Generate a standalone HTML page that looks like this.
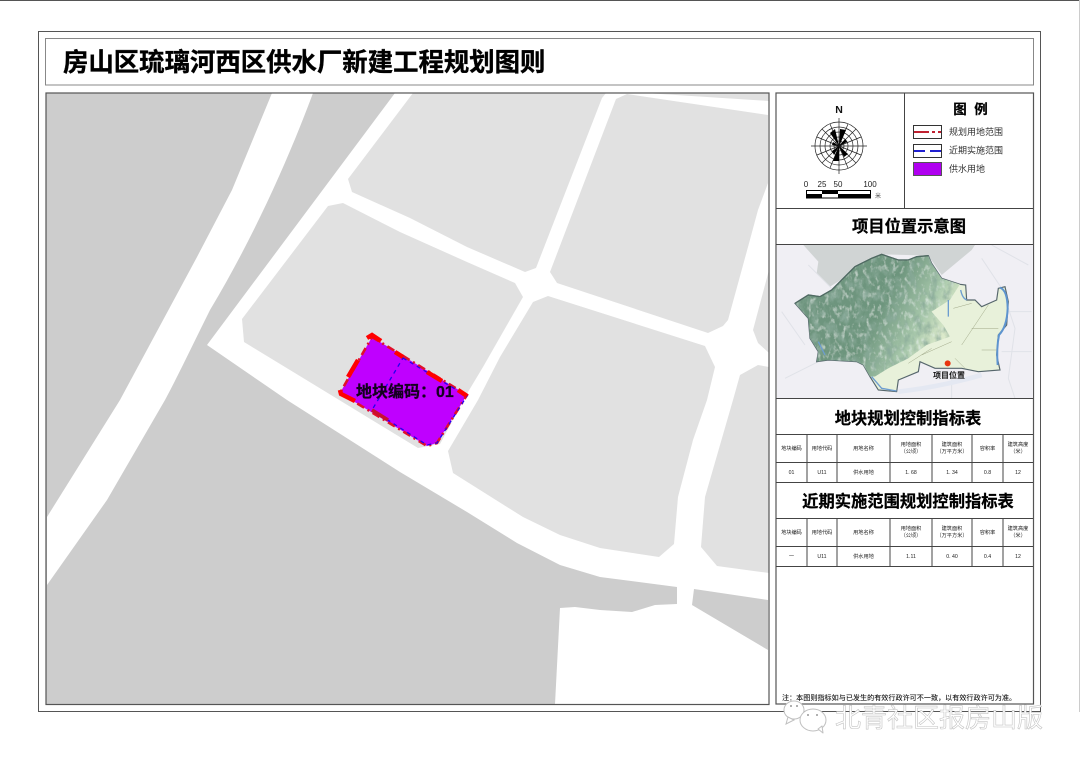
<!DOCTYPE html>
<html><head><meta charset="utf-8"><style>
html,body{margin:0;padding:0;background:#fff;width:1080px;height:764px;overflow:hidden}
svg{display:block}
text{font-family:"Liberation Sans","Noto Sans CJK SC",sans-serif}
.h{font-weight:700;fill:#000;text-anchor:middle;stroke:#000;stroke-width:.25}
.t{font-size:5.200px;fill:#222;text-anchor:middle}
.l{font-size:9px;fill:#333}
</style></head><body>
<svg width="1080" height="764" viewBox="0 0 1080 764" xmlns="http://www.w3.org/2000/svg">
<defs>
<clipPath id="mc"><rect x="46" y="93" width="723" height="611.5"/></clipPath>
<clipPath id="ic"><rect x="777" y="245" width="256" height="153"/></clipPath>
<filter id="ter" x="0" y="0" width="100%" height="100%">
<feTurbulence type="fractalNoise" baseFrequency="0.045 0.03" numOctaves="4" seed="8" result="n"/>
<feColorMatrix in="n" values="0 0 0 0 .25 0 0 0 0 .40 0 0 0 0 .32 2.200 0 0 0 -.95" result="dk"/>
<feTurbulence type="fractalNoise" baseFrequency="0.08 0.05" numOctaves="3" seed="3" result="m"/>
<feColorMatrix in="m" values="0 0 0 0 .76 0 0 0 0 .85 0 0 0 0 .80 2 0 0 0 -1.050" result="lt"/>
<feMerge result="x"><feMergeNode in="SourceGraphic"/><feMergeNode in="lt"/><feMergeNode in="dk"/></feMerge>
<feComposite in="x" in2="SourceGraphic" operator="in"/>
</filter>
<linearGradient id="gm" x1="0" y1="0" x2="1" y2=".4"><stop offset="0" stop-color="#6f9580"/><stop offset=".6" stop-color="#6d957d"/><stop offset=".85" stop-color="#a9c9ac"/><stop offset="1" stop-color="#dbe9ca"/></linearGradient>
<filter id="b"><feGaussianBlur stdDeviation=".35"/></filter>
</defs>
<rect width="1080" height="764" fill="#fff"/>
<rect x="0" y="0" width="1080" height="1" fill="#555"/>
<rect x="1079" y="0" width="1" height="712" fill="#ccc"/>
<rect x="38.500" y="31.500" width="1002" height="680" fill="none" stroke="#555"/>
<rect x="45.500" y="38.500" width="988" height="46.500" fill="#fff" stroke="#888"/>
<text x="63" y="71" font-size="25.400" font-weight="700" fill="#000" stroke="#000" stroke-width=".35">房山区琉璃河西区供水厂新建工程规划图则</text>

<g clip-path="url(#mc)">
<rect x="46" y="93" width="723" height="612" fill="#cdcdcd"/>
<path d="M272 93H313C290 155 255 235 210 310C195 340 180 372 165 400L107 500L47 585V517L120 400L197 257L232 190Z" fill="#fff"/>
<path d="M395 93H769V704H555L560 608L575 607L600 610L632 612L655 605L677 604V587L600 577L560 565L517 543L467 512L400 472L287 400L207 345Z" fill="#fff"/>
<path d="M694 589L768 600V650L692 605Z" fill="#cdcdcd"/>
<g fill="#e1e1e1">
<path d="M328 206L343 203L400 232L467 262L515 283L523 297L483 367L468 392L440 444L418 448L244 342L242 319Z"/>
<path d="M348 179L352 192L410 218L467 247L525 272L536 268L602 98L606 93H413Z"/>
<path d="M616 99L627 94L768 115V183L758 210L748 247L728 320L723 326L708 333L557 283L550 272Z"/>
<path d="M645 93H769V101Z"/>
<path d="M533 302L548 296L705 346L715 367L707 400L693 440L678 497L674 544L659 557L600 548L560 535L523 517L453 473L448 451L478 400L500 357Z"/>
<path d="M769 270L753 330L758 343L769 353Z"/>
<path d="M740 375L758 365L769 367V573L717 566L701 547L705 497L733 400Z"/>
</g>
<path d="M372 337L467 395L437 443L427 446L340 393Z" fill="#bf00ff"/>
<path d="M372 337L467 395L437 443L427 446L340 393Z" fill="none" stroke="#e0102a" stroke-width="2.600" stroke-dasharray="8 4 2 4"/>
<path d="M403 358L467 396L437 443L427 445L372 410Z" fill="none" stroke="#2200ee" stroke-width="1.300" stroke-dasharray="4 4"/>
<g stroke="#f00" stroke-width="4.500" fill="none">
<path d="M367 338L372 335L381 341"/>
<path d="M358 360L348 377"/>
<path d="M340 390L341 394L355 401"/>
<path d="M395 352L403 357"/>
<path d="M427 372L442 381"/>
<path d="M458 390L467 396"/>
</g>
<path d="M372 410L388 420" stroke="#c8102e" stroke-width="3.500" fill="none"/>
<text x="356" y="397" font-size="16" font-weight="700" fill="#14001f" stroke="#14001f" stroke-width=".3">地块编码：01</text>
</g>
<rect x="46" y="93" width="723" height="611.500" fill="none" stroke="#555" stroke-width="1.200"/>

<rect x="776" y="93" width="257.500" height="611" fill="#fff" stroke="#555" stroke-width="1.200"/>
<g stroke="#444" fill="none">
<path d="M904.500 93V208M776 208.500H1033M776 244.500H1033M776 398.500H1033M776 434.500H1033M776 462.500H1033M776 482.500H1033M776 518.500H1033M776 546.500H1033M776 566.500H1033"/>
<path d="M807 434V482M837 434V482M890 434V482M932 434V482M972 434V482M1003 434V482M807 518V566M837 518V566M890 518V566M932 518V566M972 518V566M1003 518V566"/>
</g>

<text x="839" y="113" font-size="10.500" font-weight="700" text-anchor="middle" fill="#111">N</text>
<g transform="translate(839 146)" fill="none" stroke="#222" stroke-width=".7">
<circle r="24"/><circle r="19"/><circle r="14"/><circle r="9"/><circle r="5"/>
<path d="M0 -28V28M-28 0H28M-17 -17L17 17M17 -17L-17 17M-9 -22L9 22M9 -22L-9 22M-22 -9L22 9M22 -9L-22 9"/>
<path fill="#000" stroke="none" d="M0 0L-9 -13L-4 -17ZM0 0L1 -17L7 -16ZM0 0L-6 15L0 15ZM0 0L5 11L9 8ZM0 0L-7 5L-5 9ZM0 0L6 -7L8 -4ZM0 0L-6 -4L-7 -1Z"/>
</g>
<g font-size="8" fill="#222" text-anchor="middle"><text x="806" y="187">0</text><text x="822" y="187">25</text><text x="838" y="187">50</text><text x="870" y="187">100</text></g>
<rect x="806.500" y="190.500" width="64" height="7.500" fill="#fff" stroke="#000"/>
<path d="M806 194H822V198H806ZM822 190H838V194H822ZM838 194H871V198H838Z" fill="#000"/>
<text x="875" y="198" font-size="6" fill="#555">米</text>

<text x="970.500" y="114" class="h" font-size="13.500" xml:space="preserve">图  例</text>
<rect x="913.500" y="125.500" width="28" height="13" fill="#fff" stroke="#333"/>
<path d="M914 132H929M932 132H935M938 132H941" stroke="#c02030" stroke-width="2" fill="none"/>
<rect x="913.500" y="144.500" width="28" height="13" fill="#fff" stroke="#333"/>
<path d="M914 151H925M930 151H941" stroke="#2020d0" stroke-width="2" fill="none"/>
<rect x="913.500" y="162.500" width="28" height="13" fill="#b000f0" stroke="#555"/>
<text x="949" y="135" class="l">规划用地范围</text>
<text x="949" y="153.500" class="l">近期实施范围</text>
<text x="949" y="172" class="l">供水用地</text>

<text x="909" y="232" class="h" font-size="16.300">项目位置示意图</text>

<g clip-path="url(#ic)">
<rect x="777" y="245" width="256" height="153" fill="#f0eff4"/>
<g transform="translate(775 245) scale(.33333)">
<path d="M85 0L130 50L125 85L165 125L205 100L320 28L460 32L500 90L590 15L600 0Z" fill="#d0d4d4"/>
<path d="M620 40L680 130L720 250L700 400L720 460M650 0L760 60M630 200H770M680 320H770M530 380V460M100 60L170 130M20 200L90 300M30 400L150 340" stroke="#e0e2e8" stroke-width="3" fill="none"/>
<path d="M370 440Q500 425 620 390" stroke="#e4e8f2" stroke-width="14" fill="none"/>
<path d="M60 175L100 150L135 155L170 135L205 100L240 65L290 40L320 28L370 45L400 45L425 35L460 32L470 55L500 100L555 118L572 120L575 165L600 165L620 185L665 165L670 130L690 125L700 170L695 240L670 270L665 330L675 375L610 380L560 370L480 370L435 350L430 380L370 405L365 440L310 435L285 395L265 360L245 350L160 345L125 350L130 320L105 280L100 220Z" fill="#e8f1da" stroke="#56666c" stroke-width="3.500"/>
<path filter="url(#ter)" d="M60 175L100 150L135 155L170 135L205 100L240 65L290 40L320 28L370 45L400 45L425 35L460 32L470 55L500 100L555 118L525 165L470 200L505 240L525 275L455 300L400 340L340 370L300 395L285 395L265 360L245 350L160 345L125 350L130 320L105 280L100 220Z" fill="url(#gm)"/>
<path d="M60 175L100 150L135 155L170 135L205 100L240 65L290 40L320 28L370 45L400 45L425 35L460 32" fill="none" stroke="#4f6a62" stroke-width="4"/>
<path d="M675 128Q697 135 698 190Q696 245 672 270Q664 310 668 360" stroke="#5e94cf" stroke-width="6" fill="none"/>
<path d="M557 135Q562 160 575 165M520 165V215M290 395L320 430L365 438M130 290L150 330" stroke="#6d9dd0" stroke-width="4" fill="none"/>
<path d="M535 190L590 175M590 250H670M560 300L600 240L640 180M440 330L530 290M400 355L470 310M620 315H665M570 370L540 340" stroke="#a0a888" stroke-width="1.500" fill="none"/>
<circle cx="518" cy="355" r="9" fill="#e8350f"/>
</g>
<text x="949" y="378" font-size="8" font-weight="700" fill="#111" text-anchor="middle">项目位置</text>
</g>

<text x="908" y="424" class="h" font-size="16.300">地块规划控制指标表</text>
<text x="908" y="507" class="h" font-size="16.300">近期实施范围规划控制指标表</text>

<g filter="url(#b)">
<g>
<text class="t" x="791.500" y="450">地块编码</text><text class="t" x="822" y="450">用地代码</text><text class="t" x="863.500" y="450">用地名称</text>
<text class="t" x="911" y="446">用地面积</text><text class="t" x="911" y="453">（公顷）</text>
<text class="t" x="952" y="446">建筑面积</text><text class="t" x="952" y="453">（万平方米）</text>
<text class="t" x="987.500" y="450">容积率</text>
<text class="t" x="1018" y="446">建筑高度</text><text class="t" x="1018" y="453">（米）</text>
<text class="t" x="791.500" y="474">01</text><text class="t" x="822" y="474">U11</text><text class="t" x="863.500" y="474">供水用地</text><text class="t" x="911" y="474">1. 68</text><text class="t" x="952" y="474">1. 34</text><text class="t" x="987.500" y="474">0.8</text><text class="t" x="1018" y="474">12</text>
</g>
<g transform="translate(0 84)">
<text class="t" x="791.500" y="450">地块编码</text><text class="t" x="822" y="450">用地代码</text><text class="t" x="863.500" y="450">用地名称</text>
<text class="t" x="911" y="446">用地面积</text><text class="t" x="911" y="453">（公顷）</text>
<text class="t" x="952" y="446">建筑面积</text><text class="t" x="952" y="453">（万平方米）</text>
<text class="t" x="987.500" y="450">容积率</text>
<text class="t" x="1018" y="446">建筑高度</text><text class="t" x="1018" y="453">（米）</text>
<text class="t" x="791.500" y="474">一</text><text class="t" x="822" y="474">U11</text><text class="t" x="863.500" y="474">供水用地</text><text class="t" x="911" y="474">1.11</text><text class="t" x="952" y="474">0. 40</text><text class="t" x="987.500" y="474">0.4</text><text class="t" x="1018" y="474">12</text>
</g>
</g>

<text x="782" y="700" font-size="7.100" font-weight="500" fill="#222">注：本图则指标如与已发生的有效行政许可不一致，以有效行政许可为准。</text>

<g fill="#fff" stroke="#c0c0c0" stroke-width="1">
<ellipse cx="794" cy="710" rx="10" ry="9"/>
<path d="M788 717L786 724L794 720Z"/>
<ellipse cx="813" cy="720" rx="13" ry="11"/>
<path d="M818 729L823 733L822 726Z" stroke-linejoin="round"/>
</g>
<g fill="#999"><circle cx="791" cy="706" r="1"/><circle cx="797" cy="706" r="1"/><circle cx="808" cy="715" r="1"/><circle cx="817" cy="715" r="1"/></g>
<text x="835" y="727" font-size="26" fill="#fff" stroke="#c4c4c4" stroke-width=".6">北青社区报房山版</text>
</svg>
</body></html>
